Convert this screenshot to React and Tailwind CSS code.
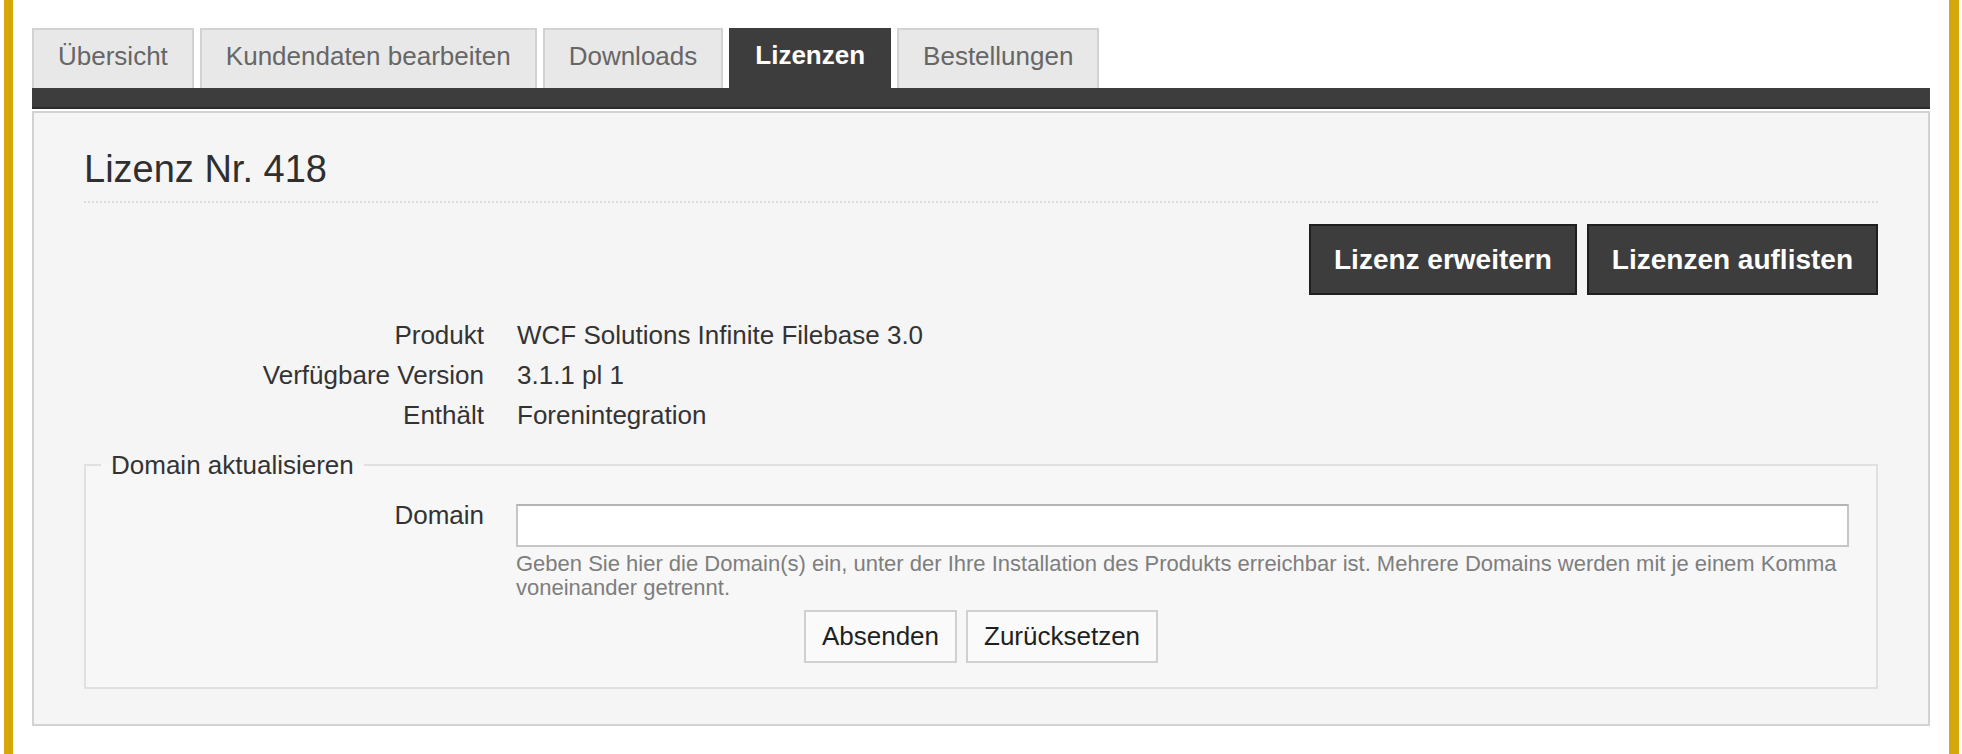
const tabs = [
  { label: "Übersicht" },
  { label: "Kundendaten bearbeiten" },
  { label: "Downloads" },
  { label: "Lizenzen", active: true },
  { label: "Bestellungen" },
];

const details = [
  { label: "Produkt", value: "WCF Solutions Infinite Filebase 3.0" },
  { label: "Verfügbare Version", value: "3.1.1 pl 1" },
  { label: "Enthält", value: "Forenintegration" },
];

function Tab({ label, active }) {
  if (active) {
    return (
      <div className="h-[60px] flex items-center pb-[6px] px-[26px] bg-[#3d3d3d] text-white font-bold text-[26px]">
        {label}
      </div>
    );
  }
  return (
    <div className="h-[60px] flex items-center pb-[6px] px-[24px] border-2 border-b-0 border-[#d2d2d2] bg-[#e8e8e8] text-[#666666] text-[26px]">
      {label}
    </div>
  );
}

export default function App() {
  return (
    <div className="flex min-h-[754px] bg-white text-[#333333] font-['Liberation_Sans',Arial,sans-serif]">
      <div className="w-[4px]" />
      <div className="w-[9px] bg-[#d5a70b]" />

      <main className="flex-1 px-[19px] pt-[28px]">
        <nav className="flex items-end gap-[6px]">
          {tabs.map((t) => (
            <Tab key={t.label} {...t} />
          ))}
        </nav>
        <div className="h-[21px] bg-[#3d3d3d] border-b-2 border-[#2c2c2c]" />

        <section className="mt-[2px] border-2 border-[#d2d2d2] bg-[#f5f5f5] px-[50px] pt-[33px] pb-[35px]">
          <h1 className="text-[38px] leading-[46px] text-[#2f2f2f] pb-[9px] border-b-2 border-dotted border-[#dcdcdc]">
            Lizenz Nr. 418
          </h1>

          <div className="mt-[21px] flex justify-end gap-[10px]">
            <button className="h-[71px] px-[23px] border-2 border-[#1f1f1f] bg-[#3d3d3d] text-white font-bold text-[28px]">
              Lizenz erweitern
            </button>
            <button className="h-[71px] px-[23px] border-2 border-[#1f1f1f] bg-[#3d3d3d] text-white font-bold text-[28px]">
              Lizenzen auflisten
            </button>
          </div>

          <dl className="mt-[20px] text-[26px] leading-[40px]">
            {details.map((d) => (
              <div key={d.label} className="flex">
                <dt className="w-[400px] text-right">{d.label}</dt>
                <dd className="ml-[33px]">{d.value}</dd>
              </div>
            ))}
          </dl>

          <fieldset className="mt-[10px] border-2 border-[#e0e0e0] bg-[#f7f7f7] pt-[10px] pb-[24px]">
            <legend className="ml-[15px] px-[10px] text-[26px] leading-[40px]">Domain aktualisieren</legend>
            <div className="flex">
              <label className="w-[398px] text-right text-[26px] leading-[40px]">Domain</label>
              <div className="flex-1 ml-[32px] mr-[27px] pt-[9px]">
                <input
                  type="text"
                  className="block w-full h-[43px] bg-white border-2 border-[#c6c6c6] border-t-[#b4b4b4] outline-none"
                />
                <p className="mt-[5px] text-[22px] leading-[24px] text-[#7e7e7e]">
                  Geben Sie hier die Domain(s) ein, unter der Ihre Installation des Produkts erreichbar ist. Mehrere Domains werden mit je einem Komma
                  <br />
                  voneinander getrennt.
                </p>
              </div>
            </div>
            <div className="mt-[10px] flex justify-center gap-[9px]">
              <button className="h-[53px] px-[16px] border-2 border-[#d0d0d0] bg-[#fafafa] text-[26px] text-[#1f1f1f]">
                Absenden
              </button>
              <button className="h-[53px] px-[16px] border-2 border-[#d0d0d0] bg-[#fafafa] text-[26px] text-[#1f1f1f]">
                Zurücksetzen
              </button>
            </div>
          </fieldset>
        </section>
      </main>

      <div className="w-[10px] bg-[#d5a70b]" />
      <div className="w-[3px]" />
    </div>
  );
}
